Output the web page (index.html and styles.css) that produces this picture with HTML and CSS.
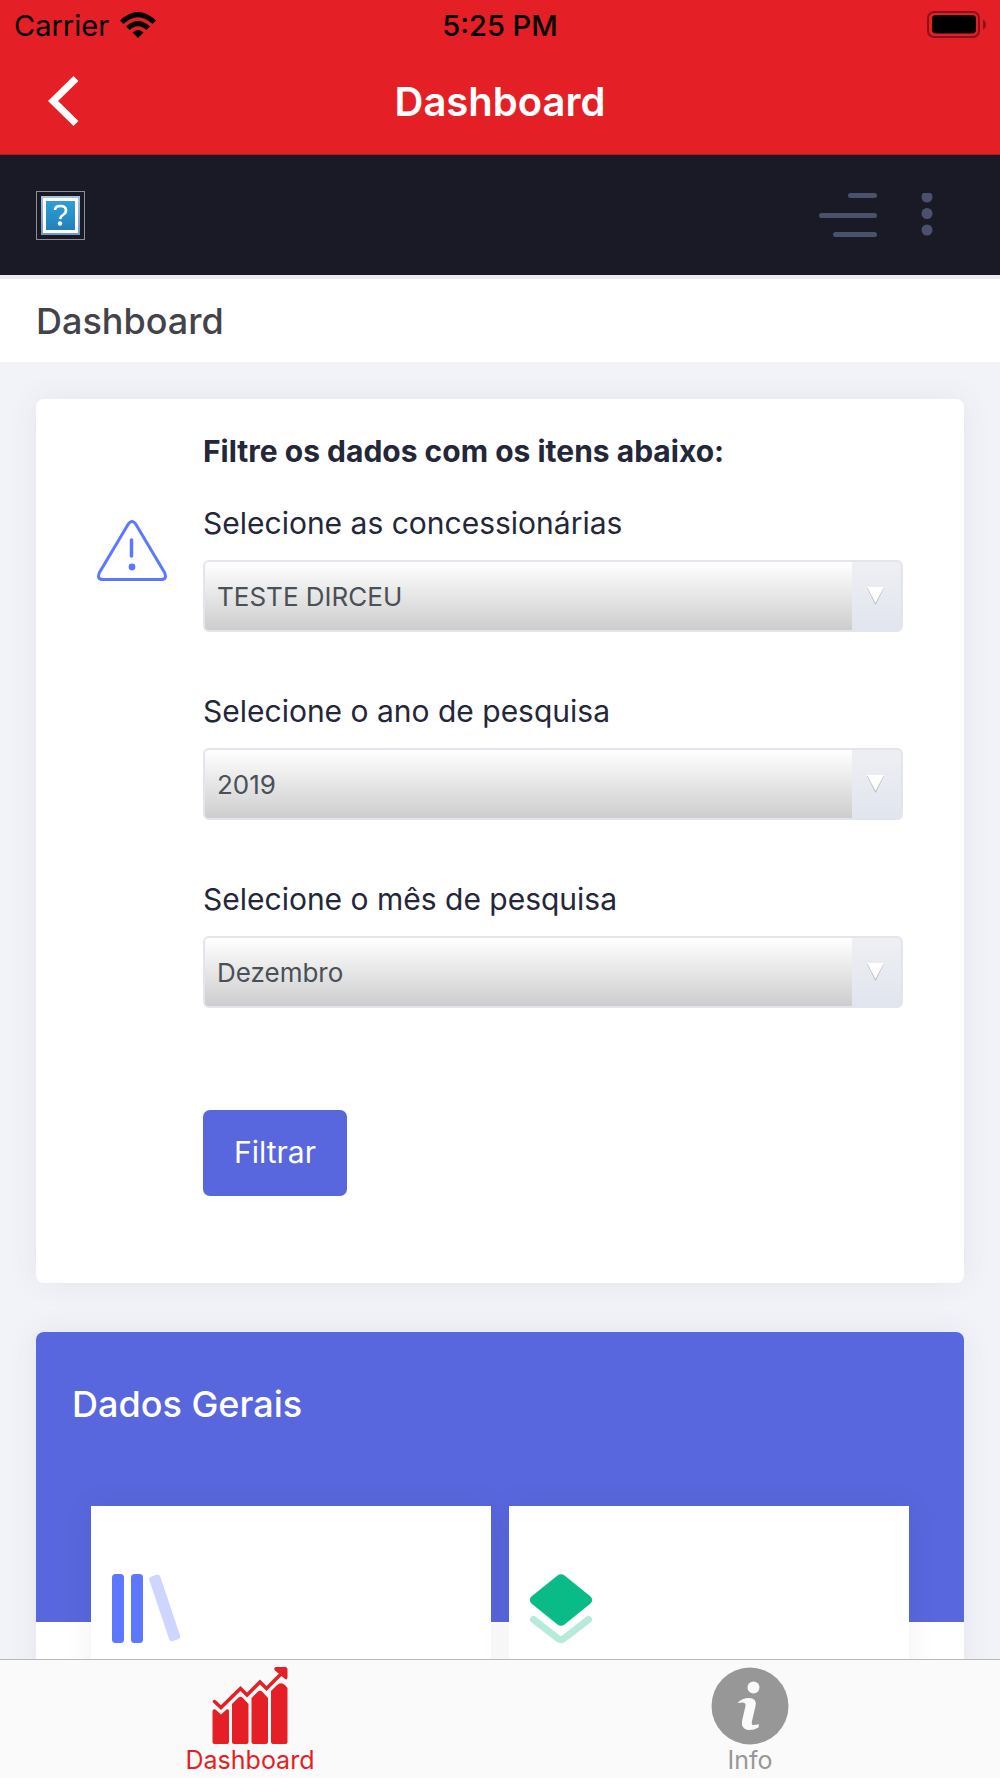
FILE: index.html
```html
<!DOCTYPE html>
<html lang="pt-BR">
<head>
    <meta charset="UTF-8">
    <meta name="viewport" content="width=device-width, initial-scale=1.0">
    <title>Dashboard</title>
    <link rel="stylesheet" href="styles.css">
</head>
<body>
    <!-- Top bar -->
    <header class="app-header">
        <div class="status-bar">
            <div class="carrier">
                <span>Carrier</span>
                <svg width="38" height="28" viewBox="0 0 38 28" aria-hidden="true">
                    <path d="M1 9.500 Q19 -7.500 37 9.500 L33.500 13 Q19 -.5 4.500 13 Z"/>
                    <path d="M7 15.500 Q19 4.500 31 15.500 L27.300 19 Q19 11.500 10.700 19 Z"/>
                    <path d="M13.500 21.500 Q19 16.500 24.500 21.500 L19 27 Z"/>
                </svg>
            </div>
            <span class="clock">5:25 PM</span>
            <svg class="battery" width="60" height="28" viewBox="0 0 60 28" aria-hidden="true">
                <rect x="2" y="1" width="51" height="25" rx="6" fill="none" stroke="#8a1218" stroke-width="2"/>
                <rect x="6" y="4" width="44" height="18.500" rx="4"/>
                <path d="M57 8.500 q3 1.500 3 5 t-3 5 z" fill="#8a1218"/>
            </svg>
        </div>
        <div class="nav-bar">
            <button class="back-btn" aria-label="Voltar">
                <svg width="32" height="52" viewBox="0 0 32 52">
                    <path d="M28 3.500 L5 26 L28 48.500" fill="none" stroke="#fff" stroke-width="7"/>
                </svg>
            </button>
            <h1 class="nav-title">Dashboard</h1>
        </div>
    </header>

    <!-- Page -->
    <main class="content">
        <div class="toolbar">
            <a class="brand" href="#" aria-label="Logo">
                <svg width="49" height="49" viewBox="0 0 49 49">
                    <defs>
                        <linearGradient id="frameBg" x1="0" y1="0" x2="0" y2="1">
                            <stop offset="0" stop-color="#a9c3e2"/>
                            <stop offset="1" stop-color="#6f9bcb"/>
                        </linearGradient>
                        <linearGradient id="imageBg" x1="0" y1="0" x2="0" y2="1">
                            <stop offset="0" stop-color="#2f9fd6"/>
                            <stop offset="1" stop-color="#2280bd"/>
                        </linearGradient>
                    </defs>
                    <rect x=".5" y=".5" width="48" height="48" fill="none" stroke="#8f8f93"/>
                    <rect x="5" y="5" width="39" height="39" fill="url(#frameBg)"/>
                    <rect x="7" y="7" width="35" height="35" fill="#fff"/>
                    <rect x="10" y="10" width="29" height="29" fill="url(#imageBg)"/>
                    <path d="M19 19 q0 -4 5.500 -4 t5.500 4.500 q0 2.500 -2.500 4 t-3.500 4.500" fill="none" stroke="#fff" stroke-width="2.600"/>
                    <circle cx="24" cy="32.500" r="2.200" fill="#fff"/>
                </svg>
            </a>
            <div class="toolbar-actions">
                <button aria-label="Menu">
                    <svg width="58" height="45" viewBox="0 0 58 45" fill="#4a516c">
                        <rect x="29" y="0" width="29" height="5" rx="2.500"/>
                        <rect x="0" y="20" width="58" height="5" rx="2.500"/>
                        <rect x="14" y="39" width="44" height="5" rx="2.500"/>
                    </svg>
                </button>
                <button aria-label="Mais">
                    <svg width="12" height="45" viewBox="0 0 12 45" fill="#4a516c">
                        <circle cx="6" cy="4" r="5.500"/>
                        <circle cx="6" cy="20.500" r="5.500"/>
                        <circle cx="6" cy="37" r="5.500"/>
                    </svg>
                </button>
            </div>
        </div>

        <div class="subheader">
            <h2>Dashboard</h2>
        </div>

        <div class="cards">
            <section class="card filter-card">
                <svg class="alert-icon" width="70" height="62" viewBox="0 0 70 62" fill="none" stroke="#5d78ff" stroke-width="3" aria-hidden="true">
                    <path d="M31 4.500 Q35 -1.500 39 4.500 L67.500 52.500 Q70.500 59.500 64 59.500 H6 Q-.5 59.500 2.500 52.500 Z"/>
                    <path d="M34.500 20 V36" stroke-linecap="round" stroke-width="3.500"/>
                    <circle cx="35" cy="47" r="3.400" fill="#5d78ff" stroke="none"/>
                </svg>
                <form class="filter-form">
                    <h3>Filtre os dados com os itens abaixo:</h3>
                    <div class="field">
                        <label for="dealer">Selecione as concessionárias</label>
                        <div class="select-box">
                            <select id="dealer"><option>TESTE DIRCEU</option></select>
                        </div>
                    </div>
                    <div class="field">
                        <label for="year">Selecione o ano de pesquisa</label>
                        <div class="select-box">
                            <select id="year"><option>2019</option></select>
                        </div>
                    </div>
                    <div class="field">
                        <label for="month">Selecione o mês de pesquisa</label>
                        <div class="select-box">
                            <select id="month"><option>Dezembro</option></select>
                        </div>
                    </div>
                    <button type="button" class="filter-btn">Filtrar</button>
                </form>
            </section>

            <section class="card">
                <div class="summary-head">
                    <h2>Dados Gerais</h2>
                </div>
                <div class="tiles">
                    <div class="tile">
                        <svg width="70" height="70" viewBox="0 0 70 70" fill="#5d78ff" aria-hidden="true">
                            <rect x="0" y="0" width="12" height="69" rx="3.500"/>
                            <rect x="19" y="0" width="12" height="69" rx="3.500"/>
                            <rect x="47" y="0" width="11.500" height="68" rx="3" fill="#ced6ff" transform="rotate(-18.500 52.700 34)"/>
                        </svg>
                    </div>
                    <div class="tile">
                        <svg width="63" height="70" viewBox="0 0 63 70" aria-hidden="true">
                            <path d="M27.500 1.500 Q31 -1.200 34.500 1.500 L60 22 Q64.500 26 60 30 L34.500 50.500 Q31 53.200 27.500 50.500 L2 30 Q-2.500 26 2 22 Z" fill="#0abb87"/>
                            <path d="M3.500 45.500 L28 64.500 Q31 66.800 34 64.500 L58.500 45.500" fill="none" stroke="#b6ebdb" stroke-width="7" stroke-linecap="round"/>
                        </svg>
                    </div>
                </div>
            </section>
        </div>
    </main>

    <!-- Bottom tabs -->
    <nav class="tab-bar">
        <a href="#" class="tab active">
            <svg width="76" height="78" viewBox="0 0 76 78" fill="#e41f26" aria-hidden="true">
                <path d="M.5 44 Q1 41.500 3.500 42.500 L9 47.500 L14.500 42.500 Q17 41.500 17 44 V75 q0 2 -2 2 H2.500 q-2 0 -2 -2 Z"/>
                <path d="M20 37 L26 31 Q28.500 28.500 31 31 L36.500 37 V75 q0 2 -2 2 H22 q-2 0 -2 -2 Z"/>
                <path d="M39.500 31 L45.500 25 Q48 22.500 50.500 25 L56 31 V75 q0 2 -2 2 H41.500 q-2 0 -2 -2 Z"/>
                <path d="M59 24 L65 18 Q69 14.500 73 18 L75.500 21 V75 q0 2 -2 2 H61 q-2 0 -2 -2 Z"/>
                <path d="M2.500 34.500 L9 40.500 L28.500 21.500 L35 28 L48 15 L54.500 21.500 L69 7" fill="none" stroke="#e41f26" stroke-width="3.500" stroke-linecap="round"/>
                <path d="M64 0 H73 q2.500 0 2.500 2.500 V10 Q75.500 14 72.500 11.500 L63 3.500 Q61 .5 64 0 Z"/>
            </svg>
            <span>Dashboard</span>
        </a>
        <a href="#" class="tab">
            <svg width="78" height="78" viewBox="0 0 78 78" aria-hidden="true">
                <circle cx="39" cy="39" r="38.500" fill="#979797"/>
                <circle cx="42.500" cy="20.500" r="6" fill="#fafafa"/>
                <path d="M26.500 36 Q31 31 38 31 Q46 31 44.500 39 L41 54 Q40 58.500 43 58 L48 57.200 L47.500 60.500 Q42 63.500 37 63 Q30 62 31 54 L34.500 39 Q35 35.500 31.500 35.500 Z" fill="#fafafa"/>
            </svg>
            <span>Info</span>
        </a>
    </nav>
</body>
</html>
```
FILE: styles.css
```css
* {
    box-sizing: border-box;
}

body {
    margin: 0;
    height: 100vh;
    display: flex;
    flex-direction: column;
    font-family: Inter, "Liberation Sans", sans-serif;
    background: #f2f3f8;
    color: #242639;
}

h1, h2, h3 {
    margin: 0;
}

button {
    padding: 0;
    border: none;
    background: none;
    font-family: inherit;
    cursor: pointer;
}

svg {
    display: block;
    flex-shrink: 0;
}

/* Top bar */
.app-header {
    background: #e41f26;
    border-bottom: 1px solid #a81c25;
}

.status-bar {
    display: grid;
    grid-template-columns: 1fr auto 1fr;
    align-items: center;
    height: 50px;
    padding: 0 14px;
    color: #000;
    font-size: 29px;
}

.carrier {
    display: flex;
    align-items: center;
    gap: 10px;
}

.clock {
    font-weight: 500;
}

.battery {
    justify-self: end;
}

.nav-bar {
    display: grid;
    grid-template-columns: 1fr auto 1fr;
    align-items: center;
    height: 104px;
    padding: 0 48px 2px;
}

.back-btn {
    justify-self: start;
}

.nav-title {
    color: #fff;
    font-size: 40px;
    font-weight: 600;
}

/* Page */
.content {
    flex: 1;
    min-height: 0;
    overflow-y: auto;
    scrollbar-width: none;
}

.toolbar {
    display: flex;
    align-items: center;
    justify-content: space-between;
    height: 120px;
    padding: 0 67px 0 36px;
    background: #1a1a27;
}

.toolbar-actions {
    display: flex;
    gap: 44px;
}

.subheader {
    padding: 18px 36px 17px;
    border-top: 4px solid #ebebf1;
    background: #fff;
}

.subheader h2,
.summary-head h2 {
    font-size: 36px;
    line-height: 48px;
    font-weight: 500;
}

.subheader h2 {
    color: #434349;
}

.cards {
    display: flex;
    flex-direction: column;
    gap: 49px;
    padding: 37px 36px;
}

.card {
    background: #fff;
    border-radius: 8px;
    box-shadow: 0 0 30px rgba(82, 63, 105, 0.08);
}

.filter-card {
    display: flex;
    align-items: flex-start;
    gap: 36px;
    padding: 30px 61px 87px;
}

.alert-icon {
    margin-top: 91px;
}

.filter-form {
    flex: 1;
    font-size: 30px;
    line-height: 45px;
}

.filter-form h3 {
    margin-bottom: 27px;
    font-size: 30px;
    font-weight: 700;
}

.field {
    display: flex;
    flex-direction: column;
    gap: 14px;
    margin-bottom: 57px;
}

.select-box {
    position: relative;
}

.select-box select {
    display: block;
    width: 100%;
    height: 72px;
    padding: 0 60px 0 12px;
    border: 2px solid #e2e5ec;
    border-radius: 6px;
    appearance: none;
    background:
        linear-gradient(#efeff3, #e1e5ef) right / 49px 100% no-repeat,
        linear-gradient(#fff, #cdcdcd);
    color: #495057;
    font-family: inherit;
    font-size: 26px;
}

/* drop-down arrow */
.select-box::after,
.select-box::before {
    content: "";
    position: absolute;
    top: 27px;
    right: 19px;
    width: 17px;
    height: 17px;
    clip-path: polygon(0 0, 100% 0, 50% 100%);
    background: #fff;
    pointer-events: none;
}

.select-box::before {
    top: 28px;
    z-index: 1;
    background: #b9b9bb;
}

.select-box::after {
    z-index: 2;
    height: 16px;
}

.filter-btn {
    margin-top: 45px;
    padding: 20px 31px 21px;
    border-radius: 7px;
    background: #5867dd;
    color: #fff;
    font-size: 30px;
    line-height: 45px;
}

.summary-head {
    padding: 48px 36px 194px;
    border-radius: 8px 8px 0 0;
    background: #5867dd;
    color: #fff;
}

.tiles {
    display: grid;
    grid-template-columns: 1fr 1fr;
    gap: 18px;
    margin-top: -116px;
    padding: 0 55px 55px;
}

.tile {
    padding: 68px 21px;
    background: #fff;
    box-shadow: 0 0 30px rgba(0, 0, 0, 0.06);
}

/* Bottom tabs */
.tab-bar {
    display: flex;
    border-top: 1px solid #b9b9b9;
    background: #fafafa;
}

.tab {
    flex: 1;
    display: flex;
    flex-direction: column;
    align-items: center;
    padding: 7px 0 2px;
    color: #979797;
    font-size: 25px;
    line-height: 31px;
    text-decoration: none;
}

.tab.active {
    color: #e41f26;
}
```
